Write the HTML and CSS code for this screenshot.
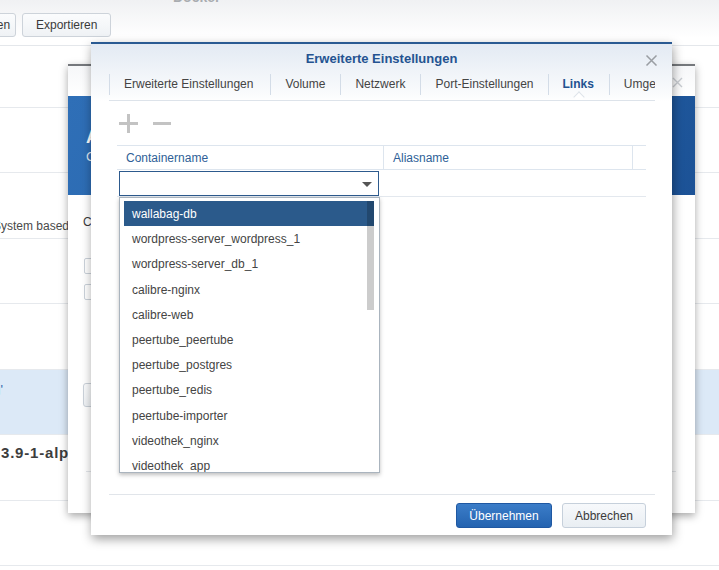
FILE: index.html
```html
<!DOCTYPE html>
<html lang="de">
<head>
<meta charset="utf-8">
<title>Erweiterte Einstellungen</title>
<link rel="stylesheet" href="styles.css">
</head>
<body>
<div class="page">
  <div class="page-head">
    <div class="page-title"><span>Docker</span></div>
    <div class="toolbar">
      <button class="btn btn-cut">Einstellungen</button>
      <button class="btn">Exportieren</button>
    </div>
  </div>
  <div class="list">
    <div class="list-row r-first"></div>
    <div class="list-row r-a"></div>
    <div class="list-row r-b row-text"><span class="cut-text">System based on Debian</span></div>
    <div class="list-row r-a"></div>
    <div class="list-row r-b"></div>
    <div class="list-row r-a row-selected"><span class="link-tail">wallabag'</span></div>
    <div class="list-row r-b row-bold"><span>3.9-1-alpine</span></div>
    <div class="list-row r-a"></div>
  </div>
</div>

<div class="dialog dialog-back">
  <div class="back-head">
    <span class="back-close"><svg width="11" height="11" viewBox="0 0 11 11"><path d="M1 1L10 10M10 1L1 10" stroke="#c9cdd2" stroke-width="1.4" fill="none"/></svg></span>
  </div>
  <div class="back-banner">
    <div class="banner-title">Allgemeine Einstellungen</div>
    <div class="banner-sub">Container erstellen</div>
  </div>
  <div class="back-content">
    <div class="back-label">Containername:</div>
    <div class="check"></div>
    <div class="check check-2"></div>
    <div class="back-btn">Erweiterte Einstellungen</div>
    <div class="back-line"></div>
  </div>
</div>

<div class="dialog dialog-front">
  <div class="dlg-top">
    <div class="dlg-title">Erweiterte Einstellungen</div>
    <span class="dlg-close"><svg width="13" height="11" viewBox="0 0 13 11"><path d="M1.5 0.5L11.5 10.5M11.5 0.5L1.5 10.5" stroke="#9a9ea3" stroke-width="1.5" fill="none"/></svg></span>
    <div class="tabs">
      <div class="tab tab-first">Erweiterte Einstellungen</div>
      <div class="tab">Volume</div>
      <div class="tab">Netzwerk</div>
      <div class="tab tab-port">Port-Einstellungen</div>
      <div class="tab tab-active">Links</div>
      <div class="tab">Umgebung</div>
    </div>
  </div>
  <div class="dlg-body">
    <div class="tools">
      <svg class="tool-plus" width="19" height="19" viewBox="0 0 19 19"><rect x="0" y="8" width="19" height="3" fill="#c3c3c3"/><rect x="8" y="0" width="3" height="19" fill="#c3c3c3"/></svg>
      <svg class="tool-minus" width="18" height="19" viewBox="0 0 18 19"><rect x="0" y="8" width="18" height="3" fill="#c3c3c3"/></svg>
    </div>
    <div class="grid">
      <div class="grid-head">
        <div class="col col-name">Containername</div>
        <div class="col col-alias">Aliasname</div>
        <div class="col col-rest"></div>
      </div>
      <div class="grid-row">
        <div class="col col-name">
          <div class="combo">
            <span class="combo-arrow"></span>
            <div class="dropdown">
              <div class="opt opt-selected">wallabag-db</div>
              <div class="opt">wordpress-server_wordpress_1</div>
              <div class="opt">wordpress-server_db_1</div>
              <div class="opt">calibre-nginx</div>
              <div class="opt">calibre-web</div>
              <div class="opt">peertube_peertube</div>
              <div class="opt">peertube_postgres</div>
              <div class="opt">peertube_redis</div>
              <div class="opt">peertube-importer</div>
              <div class="opt">videothek_nginx</div>
              <div class="opt">videothek_app</div>
              <div class="opt">videothek_db</div>
              <span class="scroll-thumb"></span>
            </div>
          </div>
        </div>
        <div class="col col-alias"></div>
        <div class="col col-rest"></div>
      </div>
    </div>
  </div>
  <div class="dlg-foot">
    <button class="btn-primary">Übernehmen</button>
    <button class="btn-secondary">Abbrechen</button>
  </div>
</div>
</body>
</html>
```
FILE: styles.css
```css
* { box-sizing: border-box; }
html, body { margin: 0; padding: 0; }
body {
  width: 719px;
  height: 570px;
  overflow: hidden;
  position: relative;
  background: #fff;
  font-family: "Liberation Sans", Arial, sans-serif;
  font-size: 12px;
  color: #404040;
}

/* background page */
.page-head {
  height: 46px;
  border-bottom: 1px solid #e4e7eb;
  background: linear-gradient(#f0f1f3, #fff 38px);
}
.page-title {
  height: 6px;
  overflow: hidden;
  padding-left: 173px;
}
.page-title span {
  display: block;
  margin-top: -11px;
  font-size: 14px;
  line-height: 16px;
  font-weight: bold;
  color: #a9acb0;
}
.toolbar {
  display: flex;
  gap: 6px;
  padding-top: 7px;
}
.btn {
  height: 24px;
  padding: 0 13px;
  border: 1px solid #cdd3da;
  border-radius: 3px;
  background: linear-gradient(#fbfcfd, #eff2f5);
  font-family: "Liberation Sans", Arial, sans-serif;
  font-size: 12px;
  color: #3a3a3a;
  white-space: nowrap;
}
.btn-cut {
  width: 92px;
  margin-left: -76px;
  text-align: right;
}
.list-row {
  border-bottom: 1px solid #e6e9ed;
}
.r-first { height: 62px; }
.r-a { height: 65px; }
.r-b { height: 66px; }
.row-text { padding-top: 45px; line-height: 16px; }
.cut-text { display: block; margin-left: -7px; color: #4a4a4a; white-space: nowrap; }
.row-selected { background: #dce9f7; padding-top: 12px; }
.link-tail {
  display: block;
  width: 70px;
  margin-left: -67px;
  text-align: right;
  color: #2f67ad;
  font-size: 13px;
  white-space: nowrap;
}
.row-bold { padding-top: 9px; line-height: 18px; }
.row-bold span {
  font-size: 15px;
  font-weight: bold;
  letter-spacing: 0.8px;
  color: #3d3d3d;
  margin-left: 1px;
  white-space: nowrap;
}

/* dialogs */
.dialog {
  position: absolute;
  background: #fff;
  display: flex;
  flex-direction: column;
}
.dialog-back {
  left: 68px;
  top: 64px;
  width: 627px;
  height: 449px;
  border-top: 2px solid #75787c;
  box-shadow: 0 3px 8px rgba(0, 0, 0, 0.35);
}
.back-head {
  height: 30px;
  position: relative;
  background: linear-gradient(#f6f7f9, #fff);
}
.back-close { position: absolute; right: 12px; top: 11px; display: flex; }
.back-banner {
  height: 99px;
  padding: 30px 0 0 18px;
  background: linear-gradient(120deg, #2f6fb7 0%, #2563a9 55%, #1c5296 100%);
  color: #fff;
}
.banner-title { font-size: 18px; font-weight: bold; line-height: 22px; white-space: nowrap; }
.banner-sub { font-size: 13px; line-height: 16px; opacity: 0.85; white-space: nowrap; margin-top: 1px; }
.back-content { padding: 19px 0 0 15px; }
.back-label { line-height: 16px; color: #3a3a3a; white-space: nowrap; }
.check {
  width: 16px;
  height: 16px;
  margin: 28px 0 0 1px;
  border: 1px solid #cbd2da;
  border-radius: 2px;
}
.check-2 { margin-top: 10px; }
.back-btn {
  width: 170px;
  height: 24px;
  margin-top: 83px;
  padding-left: 16px;
  line-height: 22px;
  border: 1px solid #cbd2da;
  border-radius: 3px;
  background: linear-gradient(#fbfcfd, #eff2f5);
  white-space: nowrap;
}
.back-line {
  margin: 64px 0 0 3px;
  width: 590px;
  border-top: 1px solid #e3e6ea;
}

.dialog-front {
  left: 91px;
  top: 42px;
  width: 581px;
  height: 493px;
  border-top: 2px solid #2a5a92;
  box-shadow: 1px 4px 10px rgba(0, 0, 0, 0.38);
}
.dlg-top {
  position: relative;
  background: linear-gradient(#e3eaf3, #fbfcfd 52px, #fff);
}
.dlg-title {
  height: 28px;
  line-height: 29px;
  text-align: center;
  font-size: 13px;
  font-weight: bold;
  color: #245391;
}
.dlg-close { position: absolute; right: 14px; top: 11px; display: flex; }
.tabs {
  display: flex;
  align-items: center;
  height: 29px;
  margin: 0 17px 0 18px;
  padding-bottom: 4px;
  border-bottom: 1px solid #dde3ea;
  overflow: hidden;
}
.tab {
  position: relative;
  flex-shrink: 0;
  height: 21px;
  line-height: 21px;
  padding: 0 15px 0 14px;
  border-left: 1px solid #d3dce7;
  white-space: nowrap;
  color: #444;
  font-size: 12px;
}
.tab-first { padding-right: 17px; }
.tab-port { padding-right: 14px; }
.tab-active {
  font-weight: bold;
  color: #225290;
}
.tab-active::after {
  content: "";
  position: absolute;
  left: 50%;
  bottom: -6px;
  width: 7px;
  height: 7px;
  margin-left: -4px;
  background: #fff;
  border-left: 1px solid #dde3ea;
  border-top: 1px solid #dde3ea;
  transform: rotate(45deg);
}

.dlg-body {
  flex: 1;
  padding: 13px 26px 0 26px;
}
.tools {
  display: flex;
  gap: 15px;
  height: 19px;
  padding-left: 2px;
}
.grid { margin-top: 12px; }
.grid-head, .grid-row { display: flex; }
.grid-head {
  height: 25px;
  border-top: 1px solid #dde5ee;
  border-bottom: 1px solid #dde5ee;
  line-height: 24px;
  color: #2f5f97;
}
.grid-row {
  height: 27px;
  border-bottom: 1px solid #e3e8ee;
}
.col { flex-shrink: 0; }
.col-name { width: 266px; }
.grid-head .col-name { padding-left: 9px; }
.col-alias { width: 249px; border-left: 1px solid #dde5ee; padding-left: 9px; }
.col-rest { flex: 1; border-left: 1px solid #dde5ee; }
.grid-row .col-alias, .grid-row .col-rest { border-left-color: transparent; }
.combo {
  position: relative;
  width: 260px;
  height: 25px;
  margin: 1px 0 0 2px;
  border: 1px solid #2d5a8d;
  background: #fff;
}
.combo-arrow {
  position: absolute;
  right: 6px;
  top: 10px;
  width: 0;
  height: 0;
  border-left: 5px solid transparent;
  border-right: 5px solid transparent;
  border-top: 5px solid #555;
}
.dropdown {
  position: absolute;
  left: -1px;
  top: 25px;
  width: 261px;
  height: 276px;
  padding: 3px 5px 0 4px;
  border: 1px solid #aab4be;
  background: #fff;
  overflow: hidden;
  box-shadow: 0 2px 4px rgba(0, 0, 0, 0.25);
}
.opt {
  height: 25.2px;
  line-height: 27px;
  padding-left: 8px;
  color: #444;
  white-space: nowrap;
}
.opt-selected {
  background: #2b5a8b;
  color: #fff;
}
.scroll-thumb {
  position: absolute;
  right: 5px;
  top: 3px;
  width: 7px;
  height: 109px;
  background: rgba(0, 0, 0, 0.2);
}

.dlg-foot {
  display: flex;
  justify-content: flex-end;
  gap: 10px;
  margin: 0 17px 0 18px;
  padding: 8px 9px 7px 0;
  border-top: 1px solid #e1e5ea;
}
.btn-primary, .btn-secondary {
  height: 25px;
  border-radius: 3px;
  font-family: "Liberation Sans", Arial, sans-serif;
  font-size: 12px;
}
.btn-primary {
  width: 96px;
  border: 1px solid #1f58a2;
  background: linear-gradient(#3b7dc8, #2463b0);
  color: #fff;
}
.btn-secondary {
  width: 84px;
  border: 1px solid #c6d0db;
  background: linear-gradient(#f7f9fb, #e9eef3);
  color: #3b3b3b;
}
```
